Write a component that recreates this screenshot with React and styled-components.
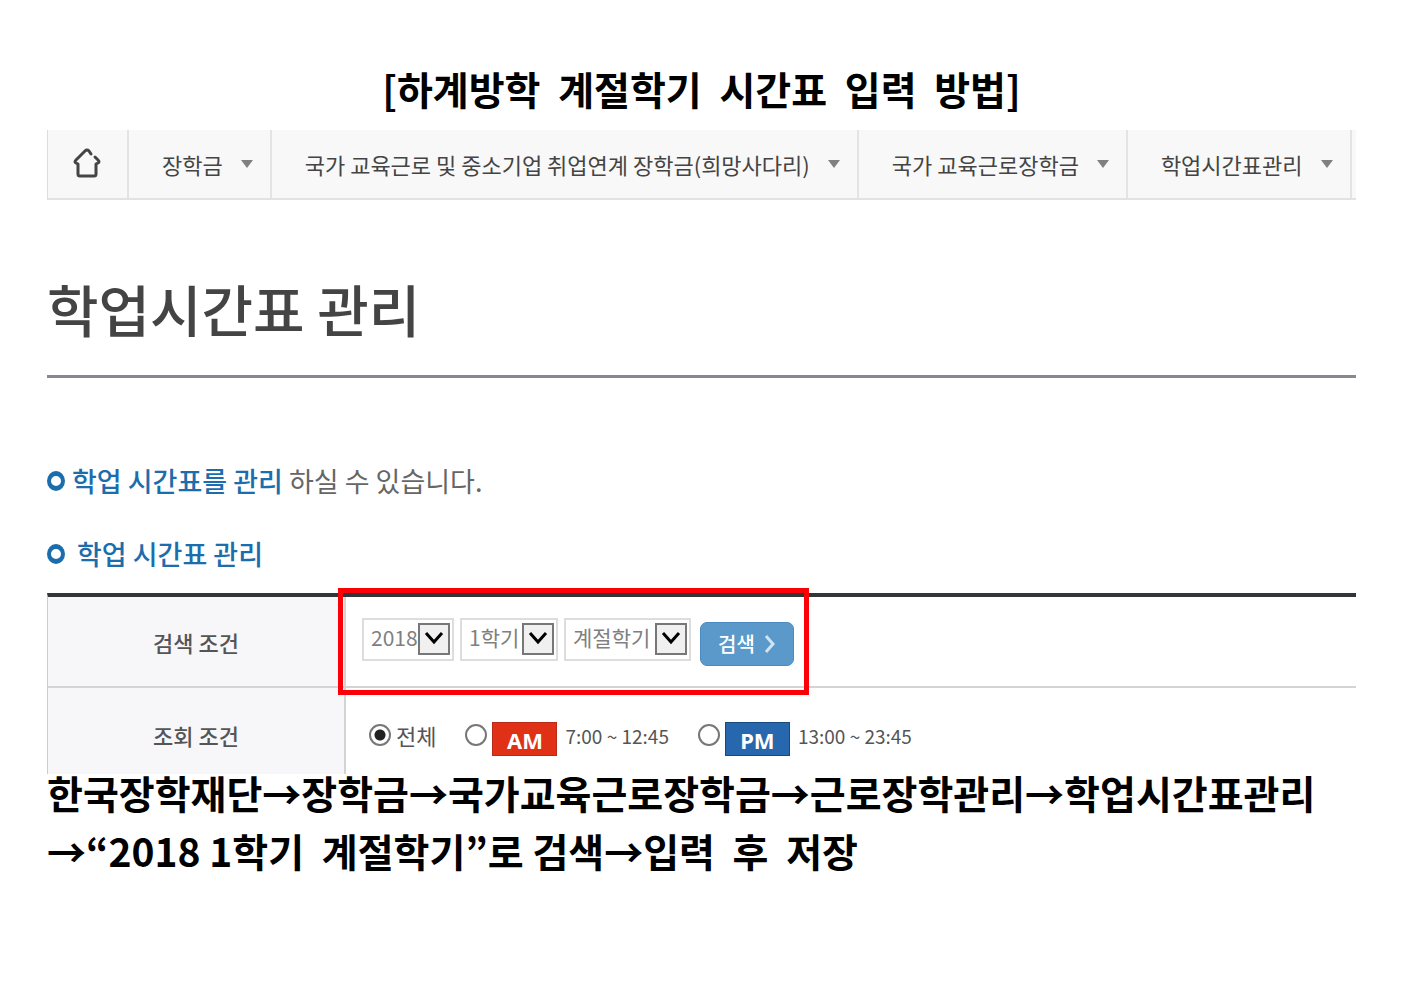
import React from "react";
import styled, { createGlobalStyle } from "styled-components";

const menus = [
  "장학금",
  "국가 교육근로 및 중소기업 취업연계 장학금(희망사다리)",
  "국가 교육근로장학금",
  "학업시간표관리",
];

function HomeIcon() {
  return (
    <svg width="28" height="32" viewBox="0 0 28 32" fill="none" aria-hidden="true">
      <path
        d="M18 6 L16 3 Q14 1 12 3 L3 12 Q1 14 3 15 L5 16 V26 Q5 28 7 28 H21 Q23 28 23 26 V16 L25 15 Q27 14 25 12 L22 9"
        stroke="#444"
        strokeWidth="3"
        strokeLinecap="round"
        strokeLinejoin="round"
      />
    </svg>
  );
}

function SelectBox({ label, value, width }) {
  return (
    <SelectWrap $width={width}>
      <Select aria-label={label} defaultValue={value}>
        <option value={value}>{value}</option>
      </Select>
      <SelectArrow>
        <svg width="20" height="16" viewBox="0 0 20 16" fill="none">
          <path d="M2 2 L10 11 L18 2" stroke="#000" strokeWidth="3" />
        </svg>
      </SelectArrow>
    </SelectWrap>
  );
}

function App() {
  return (
    <>
      <GlobalStyle />
      <Page>
        <GuideTitle>{"[하계방학  계절학기  시간표  입력  방법]"}</GuideTitle>
        <Nav>
          <HomeLink href="#" aria-label="홈">
            <HomeIcon />
          </HomeLink>
          {menus.map((menu) => (
            <MenuButton type="button" key={menu}>
              {menu}
              <Caret />
            </MenuButton>
          ))}
        </Nav>
        <PageTitle>학업시간표 관리</PageTitle>
        <Intro>
          <Ring />
          <span>
            <Blue>학업 시간표를 관리</Blue> 하실 수 있습니다.
          </span>
        </Intro>
        <SectionTitle>
          <Ring />
          학업 시간표 관리
        </SectionTitle>
        <Table>
          <tbody>
            <tr>
              <Th scope="row">검색 조건</Th>
              <Td>
                <SearchForm>
                  <SelectBox label="연도" value="2018" width={92} />
                  <SelectBox label="학기" value="1학기" width={98} />
                  <SelectBox label="학기 구분" value="계절학기" width={127} />
                  <SearchButton type="button">
                    검색
                    <svg width="12" height="20" viewBox="0 0 12 20" fill="none">
                      <path d="M2 2 L9 10 L2 18" stroke="#cfe3f3" strokeWidth="3" />
                    </svg>
                  </SearchButton>
                  <Highlight />
                </SearchForm>
              </Td>
            </tr>
            <tr>
              <Th scope="row">조회 조건</Th>
              <Td>
                <RadioGroup>
                  <RadioLabel>
                    <Radio type="radio" name="time" defaultChecked />
                    전체
                  </RadioLabel>
                  <RadioLabel>
                    <Radio type="radio" name="time" />
                    <Badge $color="#e03117" $line="#b92b18">AM</Badge>
                    <Time>7:00 ~ 12:45</Time>
                  </RadioLabel>
                  <RadioLabel>
                    <Radio type="radio" name="time" />
                    <Badge $color="#2667ad" $line="#184a80">PM</Badge>
                    <Time>13:00 ~ 23:45</Time>
                  </RadioLabel>
                </RadioGroup>
              </Td>
            </tr>
          </tbody>
        </Table>
        <Guide>
          한국장학재단→장학금→국가교육근로장학금→근로장학관리→학업시간표관리
          <br />
          {"→“2018 1학기  계절학기”로 검색→입력  후  저장"}
        </Guide>
      </Page>
    </>
  );
}

const GlobalStyle = createGlobalStyle`
  * {
    box-sizing: border-box;
  }

  body {
    margin: 0;
    background-color: #fff;
    font-family: "Noto Sans CJK KR", sans-serif;
    color: #555;
  }

  button,
  select {
    font-family: inherit;
  }
`;

const Page = styled.main`
  padding: 59px 47px 0;
`;

const GuideTitle = styled.h1`
  margin: 0 0 13px;
  font-size: 39px;
  line-height: 58px;
  font-weight: 700;
  text-align: center;
  white-space: pre-wrap;
  color: #000;
`;

const Nav = styled.nav`
  display: flex;
  height: 70px;
  border-left: 1px solid #ddd;
  border-bottom: 2px solid #e2e2e2;
  background-color: #f8f8f8;
`;

const HomeLink = styled.a`
  width: 81px;
  display: flex;
  justify-content: center;
  align-items: center;
  padding-right: 2px;
  border-right: 2px solid #e4e4e4;
`;

const MenuButton = styled.button`
  display: flex;
  align-items: center;
  gap: 18px;
  padding: 0 17px 0 33px;
  border: 0;
  border-right: 2px solid #e4e4e4;
  background: none;
  font-size: 22px;
  white-space: nowrap;
  color: #444;
`;

const Caret = styled.span`
  border: 6px solid transparent;
  border-top: 8px solid #808080;
  border-bottom: 0;
`;

const PageTitle = styled.h2`
  margin: 67px 0 0;
  padding-bottom: 26px;
  border-bottom: 3px solid #888890;
  font-size: 56px;
  line-height: 82px;
  font-weight: 500;
  color: #444;
`;

const Intro = styled.p`
  display: flex;
  align-items: center;
  gap: 7px;
  margin: 83px 0 0;
  font-size: 27px;
  line-height: 40px;
  color: #666;
`;

const Blue = styled.strong`
  font-weight: 500;
  color: #1c6dac;
`;

const SectionTitle = styled.h3`
  display: flex;
  align-items: center;
  gap: 12px;
  margin: 33px 0 19px;
  font-size: 27px;
  line-height: 40px;
  font-weight: 500;
  color: #1c6dac;
`;

const Ring = styled.span`
  width: 18px;
  height: 20px;
  border: 5px solid #1c6dac;
  border-width: 5px 4px;
  border-radius: 50%;
`;

const Table = styled.table`
  width: 100%;
  border-collapse: separate;
  border-spacing: 0;
  border-top: 4px solid #30363a;
  border-left: 1px solid #ccc;

  tr:first-child > * {
    height: 91px;
    border-bottom: 2px solid #d4d4d4;
  }

  tr:last-child > * {
    height: 86px;
    padding-top: 8px;
  }
`;

const Th = styled.th`
  width: 298px;
  padding: 0;
  border-right: 2px solid #d4d4d4;
  background-color: #f7f7f9;
  font-size: 22px;
  font-weight: 500;
`;

const Td = styled.td`
  padding: 0 0 0 16px;
`;

const SearchForm = styled.form`
  position: relative;
  display: inline-flex;
  align-items: flex-start;
  gap: 6px;
  vertical-align: middle;
`;

const SelectWrap = styled.div`
  position: relative;
  width: ${(props) => props.$width}px;
  height: 43px;
`;

const Select = styled.select`
  appearance: none;
  width: 100%;
  height: 100%;
  padding: 0 0 4px 7px;
  border: 2px solid #ddd;
  border-radius: 0;
  background-color: #fff;
  font-size: 21px;
  color: #808080;
`;

const SelectArrow = styled.span`
  position: absolute;
  top: 5px;
  right: 4px;
  width: 32px;
  height: 32px;
  display: flex;
  justify-content: center;
  align-items: center;
  border: 2px solid #777;
  background-color: #f0f0f0;
  pointer-events: none;
`;

const SearchButton = styled.button`
  display: flex;
  justify-content: center;
  align-items: center;
  gap: 9px;
  width: 94px;
  height: 44px;
  margin: 4px 0 0 3px;
  padding: 0;
  border: 1px solid #4a8bc2;
  border-radius: 7px;
  background-color: #5b99ca;
  font-size: 20px;
  font-weight: 500;
  color: #fff;
`;

const Highlight = styled.span`
  position: absolute;
  inset: -30px -15px -29px -24px;
  border: 5px solid #fb0007;
  pointer-events: none;
`;

const RadioGroup = styled.div`
  display: flex;
  align-items: center;
  gap: 29px;
  padding-left: 7px;
`;

const RadioLabel = styled.label`
  display: flex;
  align-items: center;
  gap: 5px;
  font-size: 22px;
`;

const Radio = styled.input`
  appearance: none;
  width: 22px;
  height: 22px;
  margin: 0;
  border: 2px solid #777;
  border-radius: 50%;
  background-color: #fff;

  &:checked {
    background: radial-gradient(circle, #222 0 5px, #fff 6px);
  }
`;

const Badge = styled.span`
  width: 65px;
  height: 34px;
  margin-top: 8px;
  border: 1px solid ${(props) => props.$line};
  background-color: ${(props) => props.$color};
  font-family: "Noto Sans", sans-serif;
  font-size: 22px;
  line-height: 34px;
  font-weight: 700;
  text-align: center;
  color: #fff;
`;

const Time = styled.span`
  margin-left: 3px;
  font-size: 19px;
`;

const Guide = styled.p`
  position: relative;
  margin: -11px 0 0;
  font-size: 39px;
  line-height: 58px;
  font-weight: 700;
  white-space: pre-wrap;
  color: #000;
`;

export default App;
